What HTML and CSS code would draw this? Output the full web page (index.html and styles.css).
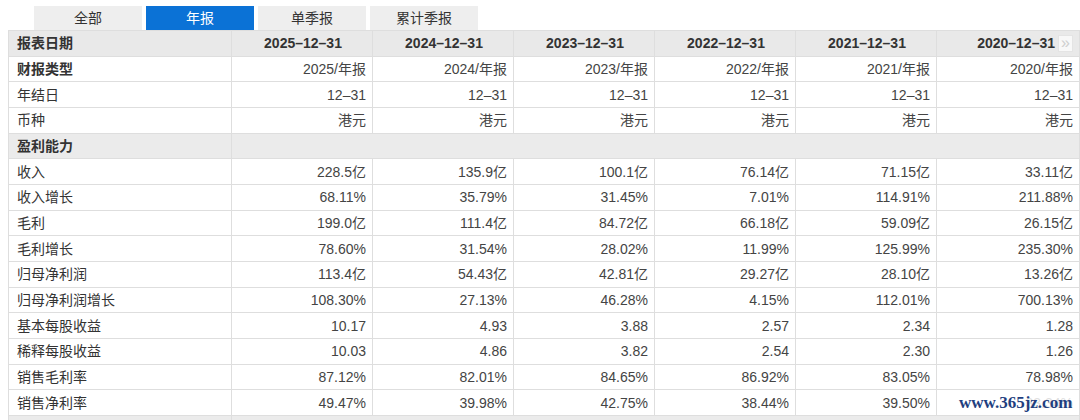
FILE: index.html
```html
<!DOCTYPE html>
<html lang="zh-CN">
<head>
<meta charset="utf-8">
<title>财务指标</title>
<link rel="stylesheet" href="styles.css">
</head>
<body>
<div class="page">
  <div class="tabs">
    <div class="tab">全部</div>
    <div class="tab active">年报</div>
    <div class="tab">单季报</div>
    <div class="tab">累计季报</div>
  </div>
  <div class="table-wrap">
    <table class="fin">
      <colgroup>
        <col class="c-label">
        <col class="c-val"><col class="c-val"><col class="c-val"><col class="c-val"><col class="c-val"><col class="c-last">
      </colgroup>
      <thead>
        <tr class="head">
          <th class="label">报表日期</th>
          <th>2025–12–31</th>
          <th>2024–12–31</th>
          <th>2023–12–31</th>
          <th>2022–12–31</th>
          <th>2021–12–31</th>
          <th class="last">2020–12–31<span class="more">»</span></th>
        </tr>
      </thead>
      <tbody>
        <tr><td class="label bold">财报类型</td><td>2025/年报</td><td>2024/年报</td><td>2023/年报</td><td>2022/年报</td><td>2021/年报</td><td>2020/年报</td></tr>
        <tr><td class="label">年结日</td><td>12–31</td><td>12–31</td><td>12–31</td><td>12–31</td><td>12–31</td><td>12–31</td></tr>
        <tr><td class="label">币种</td><td>港元</td><td>港元</td><td>港元</td><td>港元</td><td>港元</td><td>港元</td></tr>
        <tr class="section"><td class="label bold">盈利能力</td><td colspan="6"></td></tr>
        <tr><td class="label">收入</td><td>228.5亿</td><td>135.9亿</td><td>100.1亿</td><td>76.14亿</td><td>71.15亿</td><td>33.11亿</td></tr>
        <tr><td class="label">收入增长</td><td>68.11%</td><td>35.79%</td><td>31.45%</td><td>7.01%</td><td>114.91%</td><td>211.88%</td></tr>
        <tr><td class="label">毛利</td><td>199.0亿</td><td>111.4亿</td><td>84.72亿</td><td>66.18亿</td><td>59.09亿</td><td>26.15亿</td></tr>
        <tr><td class="label">毛利增长</td><td>78.60%</td><td>31.54%</td><td>28.02%</td><td>11.99%</td><td>125.99%</td><td>235.30%</td></tr>
        <tr><td class="label">归母净利润</td><td>113.4亿</td><td>54.43亿</td><td>42.81亿</td><td>29.27亿</td><td>28.10亿</td><td>13.26亿</td></tr>
        <tr><td class="label">归母净利润增长</td><td>108.30%</td><td>27.13%</td><td>46.28%</td><td>4.15%</td><td>112.01%</td><td>700.13%</td></tr>
        <tr><td class="label">基本每股收益</td><td>10.17</td><td>4.93</td><td>3.88</td><td>2.57</td><td>2.34</td><td>1.28</td></tr>
        <tr><td class="label">稀释每股收益</td><td>10.03</td><td>4.86</td><td>3.82</td><td>2.54</td><td>2.30</td><td>1.26</td></tr>
        <tr><td class="label">销售毛利率</td><td>87.12%</td><td>82.01%</td><td>84.65%</td><td>86.92%</td><td>83.05%</td><td>78.98%</td></tr>
        <tr><td class="label">销售净利率</td><td>49.47%</td><td>39.98%</td><td>42.75%</td><td>38.44%</td><td>39.50%</td><td class="faint">33.34%</td></tr>
        <tr class="section"><td class="label"></td><td colspan="6"></td></tr>
      </tbody>
    </table>
    <div class="watermark">www.365jz.com</div>
  </div>
</div>
</body>
</html>
```
FILE: styles.css
```css
html, body {
  margin: 0;
  padding: 0;
  background: #ffffff;
  overflow: hidden;
}
body {
  font-family: "Liberation Sans", "Noto Sans CJK SC", sans-serif;
  font-size: 14px;
  color: #333333;
}
.page {
  width: 1080px;
  height: 420px;
  overflow: hidden;
}
.tabs {
  display: flex;
  gap: 4px;
  padding: 6px 0 0 34px;
  height: 24px;
}
.tab {
  width: 108px;
  height: 24px;
  line-height: 24px;
  text-align: center;
  background: #eeeeee;
  color: #333333;
  font-size: 14px;
}
.tab.active {
  background: #0b72d6;
  color: #ffffff;
}
.table-wrap {
  position: relative;
  margin-left: 8px;
  width: 1072px;
}
.fin {
  border-collapse: collapse;
  table-layout: fixed;
  width: 1072px;
}
.c-label { width: 223px; }
.c-val { width: 141px; }
.c-last { width: 143px; }
.fin th, .fin td {
  border: 1px solid #dedede;
  height: 24.67px;
  padding: 0 6px 0 8px;
  white-space: nowrap;
  overflow: hidden;
  text-align: right;
  color: #444444;
  font-weight: normal;
  line-height: 18px;
}
.fin tr.head th {
  background: #e9e9e9;
  font-weight: bold;
  text-align: center;
  color: #333333;
}
.fin tr.head th.label {
  text-align: left;
}
.fin tr.head th.last {
  position: relative;
  padding-right: 24px;
  text-align: right;
}
.fin td.label {
  text-align: left;
  color: #333333;
}
.fin .bold {
  font-weight: bold;
}
.fin tr.section td {
  background: #ebebeb;
}
.fin td.faint {
  color: #b8b8b8;
}
.more {
  position: absolute;
  right: 6px;
  top: 4px;
  width: 15px;
  height: 17px;
  box-sizing: border-box;
  border: 1px solid #e4e4e4;
  background: #f8f8f8;
  color: #cfcfcf;
  font-size: 16px;
  font-weight: normal;
  line-height: 14px;
  text-align: center;
}
.watermark {
  position: absolute;
  left: 950px;
  top: 362px;
  padding: 0 1px;
  font-family: "Liberation Serif", "DejaVu Serif", serif;
  font-size: 17px;
  font-weight: bold;
  color: #1f3f7f;
  background: rgba(255, 255, 255, 0.55);
  line-height: 22px;
}
```
